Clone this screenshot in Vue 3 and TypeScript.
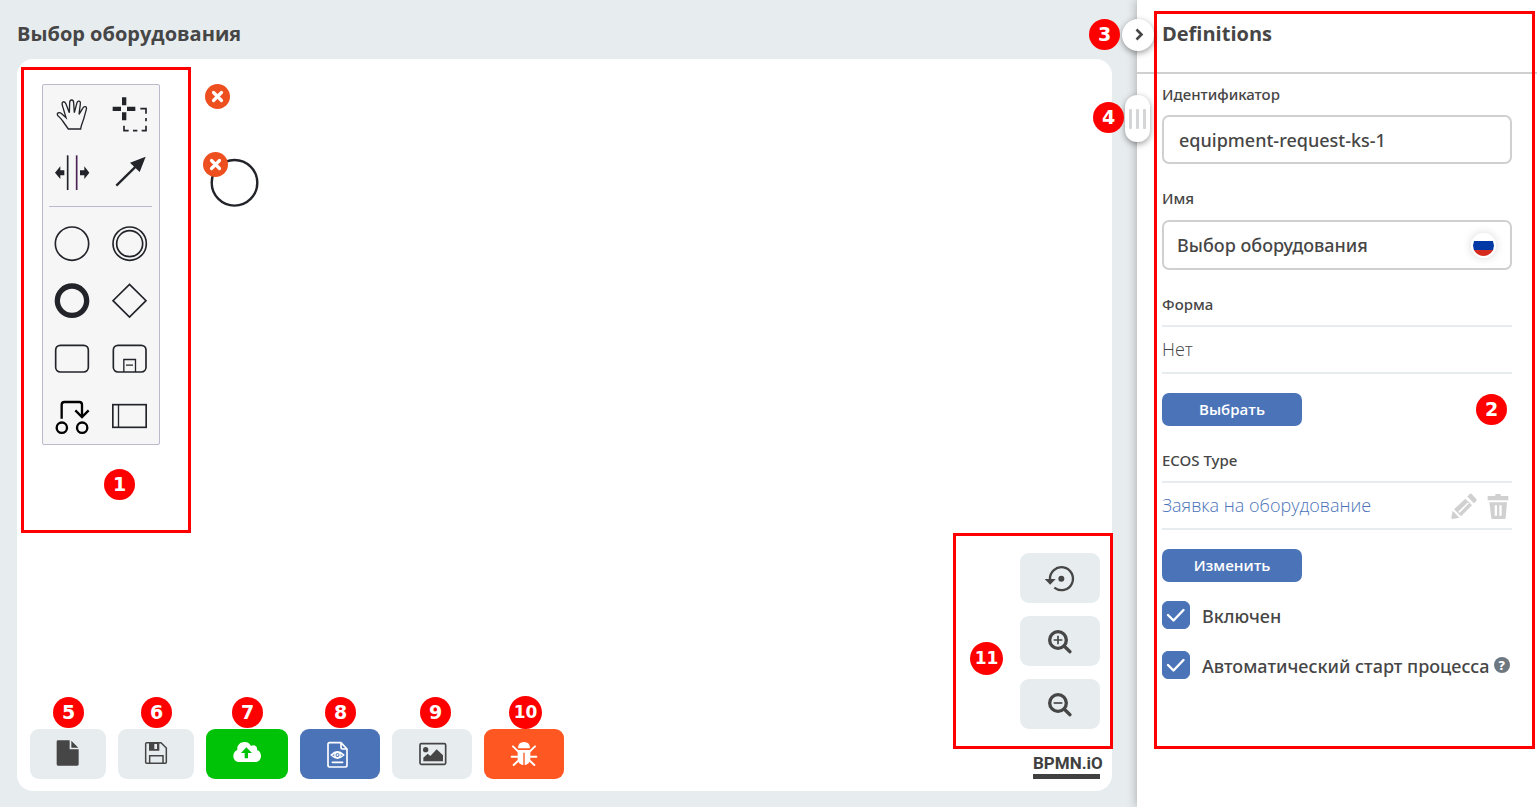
<script setup lang="ts">
import { ref } from 'vue'

const identifier = ref('equipment-request-ks-1')
const name = ref('Выбор оборудования')
const enabled = ref(true)
const autoStart = ref(true)
</script>

<template>
  <div class="page">
    <main class="editor">
      <h1 class="title">Выбор оборудования</h1>
      <section class="canvas">
        <div class="workspace">
          <div class="palette">
            <div class="tools tools-main">
              <button type="button" aria-label="Рука">
                <svg viewBox="129 258 174 171"><path class="line fine" d="M205 387 L188 363 C182 354 176 350 173 346 C169 340 177 334 185 341 L198 353 L187 316 C184 303 194 302 198 312 L208 338 L209 309 C209 297 221 297 221 309 L223 338 L231 308 C234 300 243 303 241 312 L237 343 L248 325 C253 316 262 320 259 328 L253 350 C250 364 244 372 242 387 Z" /></svg>
              </button>
              <button type="button" aria-label="Лассо">
                <svg viewBox="303 258 174 171">
                  <path class="solid" d="M338 320H363V333H338Z M381 320H406V333H381Z M366 292H379V316H366Z M366 337H379V361H366Z" />
                  <path class="line" d="M421 326H438V341 M438 354V364 M438 377V392H425 M412 392H399 M386 392H372V377" />
                </svg>
              </button>
              <button type="button" aria-label="Пространство">
                <svg viewBox="129 429 174 171">
                  <path class="line" d="M203 466V570" />
                  <path class="line violet" d="M230 466V570" />
                  <path class="solid" d="M165 518L181 499V511H193V526H181V537Z M268 518L253 499V511H240V526H253V537Z" />
                </svg>
              </button>
              <button type="button" aria-label="Соединение">
                <svg viewBox="303 429 174 171">
                  <path class="line thick" d="M349 557L410 497" />
                  <path class="solid" d="M437 470L390 488L419 516Z" />
                </svg>
              </button>
            </div>
            <hr />
            <div class="tools tools-shapes">
              <button type="button" aria-label="Начальное событие">
                <svg viewBox="69 15 174 171"><circle class="line" cx="156" cy="101" r="50" /></svg>
              </button>
              <button type="button" aria-label="Промежуточное событие">
                <svg viewBox="243 15 174 171"><circle class="line" cx="329" cy="101" r="50" /><circle class="line" cx="329" cy="101" r="39" /></svg>
              </button>
              <button type="button" aria-label="Конечное событие">
                <svg viewBox="69 186 174 171"><circle class="line bold" cx="156" cy="272" r="44" /></svg>
              </button>
              <button type="button" aria-label="Шлюз">
                <svg viewBox="243 186 174 171"><path class="line" d="M328.500 223L378 272L328.500 321L279 272Z" /></svg>
              </button>
              <button type="button" aria-label="Задача">
                <svg viewBox="69 360 174 171"><rect class="line" x="107" y="406" width="98" height="80" rx="14" /></svg>
              </button>
              <button type="button" aria-label="Подпроцесс">
                <svg viewBox="243 360 174 171">
                  <rect class="line" x="280" y="406" width="98" height="80" rx="14" />
                  <path class="line fine" d="M311.500 486V448.500H346.500V486 M318 465.500H339" />
                </svg>
              </button>
              <button type="button" aria-label="Связь">
                <svg viewBox="69 531 174 171"><path class="line black" d="M125 626V584Q125 576 133 576H178Q186 576 186 584V621 M166 601L186 621L206 601" /><circle class="line black" cx="125.500" cy="653" r="15.500" /><circle class="line black" cx="186.500" cy="653" r="15.500" /></svg>
              </button>
              <button type="button" aria-label="Участник">
                <svg viewBox="243 531 174 171"><rect class="line" x="278.500" y="584" width="100" height="68" /><path class="line fine" d="M295.500 584V652" /></svg>
              </button>
            </div>
          </div>
        </div>

        <svg class="diagram" viewBox="0 0 70 130" aria-hidden="true">
          <circle cx="38.500" cy="104.800" r="22.800" fill="#fff" stroke="#22242a" stroke-width="2.400" />
          <g fill="#ee4f1f"><circle cx="21.500" cy="18.500" r="12.500" /><circle cx="19.500" cy="86.500" r="12.500" /></g>
          <path d="M17.500 14.500l8 8m0-8l-8 8M15.500 82.500l8 8m0-8l-8 8" stroke="#fff" stroke-width="3.200" stroke-linecap="round" />
        </svg>

        <div class="zoom-tools">
          <button type="button" class="tool" aria-label="Сбросить масштаб">
            <svg viewBox="312 117 96 90" class="w32"><path d="M330 166A34.500 34.500 0 1 1 343 191" fill="none" stroke="currentColor" stroke-width="7" /><path d="M314 165H347L330.500 182Z" /><circle cx="364" cy="164" r="9" /></svg>
          </button>
          <button type="button" class="tool" aria-label="Увеличить">
            <svg viewBox="312 303 96 90" class="w32"><circle cx="354" cy="345" r="25" fill="none" stroke="currentColor" stroke-width="10" /><path d="M373 364L390 380" stroke="currentColor" stroke-width="10" stroke-linecap="round" /><path d="M341 345H367M354 332V358" stroke="currentColor" stroke-width="5" /></svg>
          </button>
          <button type="button" class="tool" aria-label="Уменьшить">
            <svg viewBox="312 303 96 90" class="w32"><circle cx="354" cy="345" r="25" fill="none" stroke="currentColor" stroke-width="10" /><path d="M373 364L390 380" stroke="currentColor" stroke-width="10" stroke-linecap="round" /><path d="M341 345H367" stroke="currentColor" stroke-width="5" /></svg>
          </button>
        </div>

        <footer class="bottom">
          <button type="button" class="tool" aria-label="Создать">
            <svg viewBox="132 147 84 90" class="w28"><path d="M144 151H179V178H206V223Q206 227 202 227H144Q140 227 140 223V155Q140 151 144 151Z M184 152L205 173H184Z" /></svg>
            <span class="badge over">5</span>
          </button>
          <button type="button" class="tool" aria-label="Сохранить">
            <svg viewBox="396 147 84 90" class="w28"><path d="M410 158H453L469 174V217Q469 220 466 220H410Q407 220 407 217V161Q407 158 410 158Z M419 219V197H459V219" fill="none" stroke="currentColor" stroke-width="4.500" /><path fill-rule="evenodd" d="M417 158H448V182H417Z M433 162V177H441V162Z" /></svg>
            <span class="badge over">6</span>
          </button>
          <button type="button" class="tool green" aria-label="Опубликовать">
            <svg viewBox="660 147 102 90" class="w34"><path fill-rule="evenodd" d="M688 216C676 216 670 208 670 198C670 188 676 182 682 180C680 166 690 156 704 156C713 156 720 161 723 168C732 161 744 170 741 180C748 182 753 189 753 198C753 208 746 216 736 216Z M709 172L693 189H704V205H714V189H726Z" /></svg>
            <span class="badge over">7</span>
          </button>
          <button type="button" class="tool blue" aria-label="Просмотр">
            <svg viewBox="102 147 96 90" class="w32"><path d="M119 158H153L171 177V226Q171 231 166 231H119Q114 231 114 226V163Q114 158 119 158Z M153 158V172Q153 177 158 177H171 M124 195Q142 177 161 195Q142 213 124 195Z M127 217H158" fill="none" stroke="currentColor" stroke-width="5" stroke-linecap="round" /><circle cx="142.500" cy="195" r="8" fill="none" stroke="currentColor" stroke-width="4" /><circle cx="142.500" cy="195" r="3" /></svg>
            <span class="badge over">8</span>
          </button>
          <button type="button" class="tool" aria-label="Изображение">
            <svg viewBox="378 147 96 90" class="w32"><rect x="390" y="161" width="77" height="62" rx="4" fill="none" stroke="currentColor" stroke-width="5" /><circle cx="407" cy="179" r="8" /><path d="M400 214V203L413 191L421 198L440 178L459 196V214Z" /></svg>
            <span class="badge over over-end">9</span>
          </button>
          <button type="button" class="tool orange" aria-label="Отладка">
            <svg viewBox="654 147 96 90" class="w32"><path d="M684 175Q684 156 702 156Q720 156 720 175Z M683 180H721V205C721 218 713 224 704 225V188H700V225C690 224 683 218 683 205Z" /><path d="M669 169L685 185M735 169L719 185M665 200H685M739 200H719M671 225L687 210M733 225L717 210" stroke="currentColor" stroke-width="6" stroke-linecap="round" /></svg>
            <span class="badge over wide">10</span>
          </button>
          <a class="logo" href="#">BPMN.iO</a>
        </footer>

        <div class="frame frame-palette"></div>
        <span class="badge badge-palette">1</span>
        <div class="frame frame-zoom"></div>
        <span class="badge wide badge-zoom">11</span>
      </section>
    </main>

    <aside class="panel">
      <header class="panel-head"><h2>Definitions</h2></header>
      <form class="fields" @submit.prevent>
        <label class="caption" for="ident">Идентификатор</label>
        <div class="box box-id"><input id="ident" v-model="identifier" type="text" /></div>

        <label class="caption" for="name">Имя</label>
        <div class="box">
          <input id="name" v-model="name" type="text" />
          <span class="flag"></span>
        </div>

        <span class="caption">Форма</span>
        <div class="row"><span>Нет</span></div>
        <button type="button" class="action">Выбрать</button>

        <span class="caption">ECOS Type</span>
        <div class="row">
          <a href="#">Заявка на оборудование</a>
          <button type="button" class="icon" aria-label="Редактировать">
            <svg viewBox="934 159 78 78"><path d="M983 170L990 162Q993 159 996 162L1010 177Q1012 180 1010 183L1003 190Z" /><path fill-rule="evenodd" d="M977 176L997 196L964 229L943 208Z M983 188L955 216L960 218L988 190Z" /><path d="M939 212L959 233L939 237Q935 237 935 233Z" /></svg>
          </button>
          <button type="button" class="icon" aria-label="Удалить">
            <svg viewBox="1036 159 78 78"><path fill-rule="evenodd" d="M1044 168H1067V162H1083V168H1106V181H1044Z M1049 187H1102L1098 234Q1098 237 1094 237H1059Q1055 237 1055 234Z M1065 196V227H1072V196Z M1079 196V227H1086V196Z" /></svg>
          </button>
        </div>
        <button type="button" class="action">Изменить</button>

        <label class="check">
          <span class="tick"><input v-model="enabled" type="checkbox" /><svg v-if="enabled" viewBox="0 0 28 28"><path d="M6 14L11.500 19.500L21.500 9" /></svg></span>
          <span class="check-text">Включен</span>
        </label>
        <label class="check">
          <span class="tick"><input v-model="autoStart" type="checkbox" /><svg v-if="autoStart" viewBox="0 0 28 28"><path d="M6 14L11.500 19.500L21.500 9" /></svg></span>
          <span class="check-text">Автоматический старт процесса</span>
          <span class="help">?</span>
        </label>
      </form>

      <div class="frame frame-panel"></div>
      <button type="button" class="collapse" aria-label="Свернуть панель">
        <svg viewBox="0 0 16 16"><path d="M6.500 2.500L11.500 7.500L6.500 12.500" /></svg>
      </button>
      <div class="grip"><i></i><i></i><i></i></div>
      <span class="badge badge-form">2</span>
      <span class="badge badge-collapse">3</span>
      <span class="badge badge-grip">4</span>
    </aside>
  </div>
</template>

<style>
body {
  margin: 0;
}
</style>

<style scoped>
* {
  box-sizing: border-box;
}
.page {
  display: flex;
  min-height: 100vh;
  overflow: hidden;
  background: #e7ecef;
  color: #464646;
  font-family: "Open Sans", "Noto Sans", sans-serif;
}
button {
  padding: 0;
  border: 0;
  background: none;
  color: inherit;
  font-family: inherit;
  cursor: pointer;
}
svg {
  display: block;
  fill: currentColor;
}
a {
  text-decoration: none;
}
.editor {
  display: flex;
  flex: 1;
  flex-direction: column;
  min-width: 0;
  padding: 20px 25px 16px 17px;
}
h1,
h2 {
  margin: 0;
  font-size: 20px;
  font-weight: 700;
  line-height: 28px;
}
.title {
  margin-bottom: 11px;
}
.canvas {
  position: relative;
  display: flex;
  flex: 1;
  flex-direction: column;
  border-radius: 16px;
  background: #fff;
}
.workspace {
  flex: 1;
  padding: 25px;
}
.palette {
  width: 118px;
  padding-top: 1px;
  border: 1px solid #bbb9cb;
  border-radius: 2px;
  background: #f6f6f6;
  color: #22242a;
}
.palette hr {
  height: 1px;
  margin: 5px 7px 8px 6px;
  border: 0;
  background: #bbb9cb;
}
.tools {
  display: grid;
  grid-template-columns: 1fr 1fr;
}
.tools-main {
  grid-template-rows: 57px 58px;
}
.tools-shapes {
  grid-template-rows: 57px 58px 57px 57px;
}
.tools button {
  display: flex;
  align-items: flex-start;
}
.tools svg {
  width: 58px;
  height: 57px;
}
.line {
  fill: none;
  stroke: #22242a;
  stroke-width: 5;
}
.fine {
  stroke-width: 4;
}
.thick {
  stroke-width: 7;
}
.bold {
  stroke-width: 16;
}
.black {
  stroke: #000;
  stroke-width: 7;
}
.violet {
  stroke: #4c2257;
}
.diagram {
  position: absolute;
  top: 19px;
  left: 179px;
  width: 70px;
  height: 130px;
}
.zoom-tools {
  position: absolute;
  right: 12px;
  bottom: 62px;
  display: grid;
  gap: 13px;
}
.bottom {
  display: flex;
  gap: 12px;
  align-items: flex-end;
  padding: 0 12px 12px 13px;
}
.tool {
  position: relative;
  display: flex;
  align-items: center;
  height: 50px;
  padding: 0 24px;
  border-radius: 9px;
  background: #e7ecef;
}
.tool svg {
  height: 30px;
}
.w28 {
  width: 28px;
}
.w32 {
  width: 32px;
}
.w34 {
  width: 34px;
}
.green {
  background: #00c308;
  color: #fff;
}
.blue {
  background: #4b74b8;
  color: #fff;
}
.orange {
  background: #ff5722;
  color: #fff;
}
.logo {
  width: 67px;
  margin-left: auto;
  border-bottom: 5px solid #404040;
  color: #404040;
  font-family: Roboto, "Open Sans", sans-serif;
  font-size: 17px;
  font-weight: 700;
  line-height: 22px;
  text-align: center;
}
.badge {
  position: absolute;
  width: 31px;
  height: 31px;
  border-radius: 50%;
  background: #f00;
  color: #fff;
  font-family: "DejaVu Sans", sans-serif;
  font-size: 19px;
  font-weight: 700;
  line-height: 31px;
  text-align: center;
}
.wide {
  width: 33px;
  height: 33px;
  font-size: 17px;
  line-height: 33px;
}
.over {
  top: -32px;
  left: calc(50% - 15px);
}
.over.wide {
  top: -33px;
}
.over-end {
  left: calc(50% - 12px);
}
.badge-palette {
  top: 410px;
  left: 87px;
}
.badge-zoom {
  right: 109px;
  bottom: 116px;
}
.frame {
  position: absolute;
  border: 3px solid #f00;
  pointer-events: none;
}
.frame-palette {
  top: 8px;
  left: 4px;
  width: 170px;
  height: 466px;
}
.frame-zoom {
  right: -1px;
  bottom: 42px;
  width: 160px;
  height: 216px;
}
.frame-panel {
  top: 11px;
  right: 2px;
  left: 17px;
  height: 738px;
}
.panel {
  position: relative;
  flex: 0 0 400px;
  min-width: 0;
  background: #fff;
  box-shadow: 0 0 10px rgba(0, 0, 0, 0.3);
}
.panel-head {
  padding: 20px 25px 24px;
  border-bottom: 2px solid #d0d0d0;
}
.fields {
  display: flex;
  flex-direction: column;
  padding: 10px 25px;
}
.caption {
  margin-bottom: 10px;
  font-family: "Noto Sans", "Open Sans", sans-serif;
  font-size: 15px;
  font-weight: 500;
  line-height: 21px;
}
.box {
  display: flex;
  align-items: center;
  height: 50px;
  margin-bottom: 24px;
  padding: 0 14px 0 13px;
  border: 2px solid #d0d0d0;
  border-radius: 7px;
}
.box-id {
  height: 49px;
  padding-left: 15px;
}
.box-id + .caption {
  margin-bottom: 11px;
}
.box input {
  flex: 1;
  min-width: 0;
  padding: 0;
  border: 0;
  outline: 0;
  background: none;
  color: inherit;
  font: 500 18px/24px "Noto Sans", "Open Sans", sans-serif;
}
.flag {
  width: 25px;
  height: 25px;
  border: 2px solid #fff;
  border-radius: 50%;
  background: linear-gradient(#fff 6px, #0039a6 6px 15px, #d52b1e 15px);
  box-shadow: 0 0 10px rgba(0, 0, 0, 0.16);
}
.row {
  display: flex;
  gap: 8px;
  align-items: center;
  height: 49px;
  margin-bottom: 19px;
  padding: 0 1px 2px 0;
  border-top: 2px solid #e7ecef;
  border-bottom: 2px solid #e7ecef;
  font-size: 18px;
  font-weight: 300;
  line-height: 24px;
}
.row a {
  flex: 1;
  color: #4b74b8;
}
.icon {
  padding-top: 2px;
  color: #d0d0d0;
}
.icon svg {
  width: 26px;
  height: 26px;
}
.action {
  width: 140px;
  height: 33px;
  margin-bottom: 24px;
  padding-bottom: 2px;
  border-radius: 7px;
  background: #4b74b8;
  color: #fff;
  font-size: 15px;
  font-weight: 600;
}
.action + .check {
  margin-top: -5px;
}
.check {
  display: flex;
  align-items: center;
  margin-bottom: 22px;
  font-family: "Noto Sans", "Open Sans", sans-serif;
  font-size: 18px;
  font-weight: 500;
  line-height: 26px;
  white-space: nowrap;
}
.check-text {
  padding-top: 2px;
}
.tick {
  position: relative;
  margin-right: 12px;
}
.tick input {
  display: block;
  width: 28px;
  height: 28px;
  margin: 0;
  border: 1px solid #4b74b8;
  border-radius: 6px;
  appearance: none;
}
.tick input:checked {
  background: #4b74b8;
}
.tick svg {
  position: absolute;
  inset: 0;
  fill: none;
  stroke: #fff;
  stroke-width: 2.4;
  stroke-linecap: round;
  stroke-linejoin: round;
  pointer-events: none;
}
.help {
  width: 16px;
  height: 16px;
  margin-left: 4px;
  border-radius: 50%;
  background: #6d7880;
  color: #fff;
  font-size: 13px;
  font-weight: 800;
  line-height: 16px;
  text-align: center;
}
.collapse {
  position: absolute;
  top: 19px;
  left: -15px;
  display: grid;
  place-items: center;
  width: 32px;
  height: 32px;
  border-radius: 50%;
  background: #fff;
  box-shadow: 0 2px 6px rgba(0, 0, 0, 0.4);
}
.collapse svg {
  width: 16px;
  height: 16px;
  fill: none;
  stroke: #464646;
  stroke-width: 2.6;
}
.grip {
  position: absolute;
  top: 95px;
  left: -12px;
  display: flex;
  gap: 4px;
  align-items: center;
  justify-content: center;
  width: 25px;
  height: 47px;
  border-radius: 12px;
  background: #fff;
  box-shadow: 0 2px 6px rgba(0, 0, 0, 0.4);
}
.grip i {
  width: 3px;
  height: 20px;
  border-radius: 1px;
  background: #d3d5d7;
}
.badge-form {
  top: 394px;
  right: 30px;
}
.badge-collapse {
  top: 19px;
  left: -48px;
}
.badge-grip {
  top: 102px;
  left: -44px;
}
</style>
